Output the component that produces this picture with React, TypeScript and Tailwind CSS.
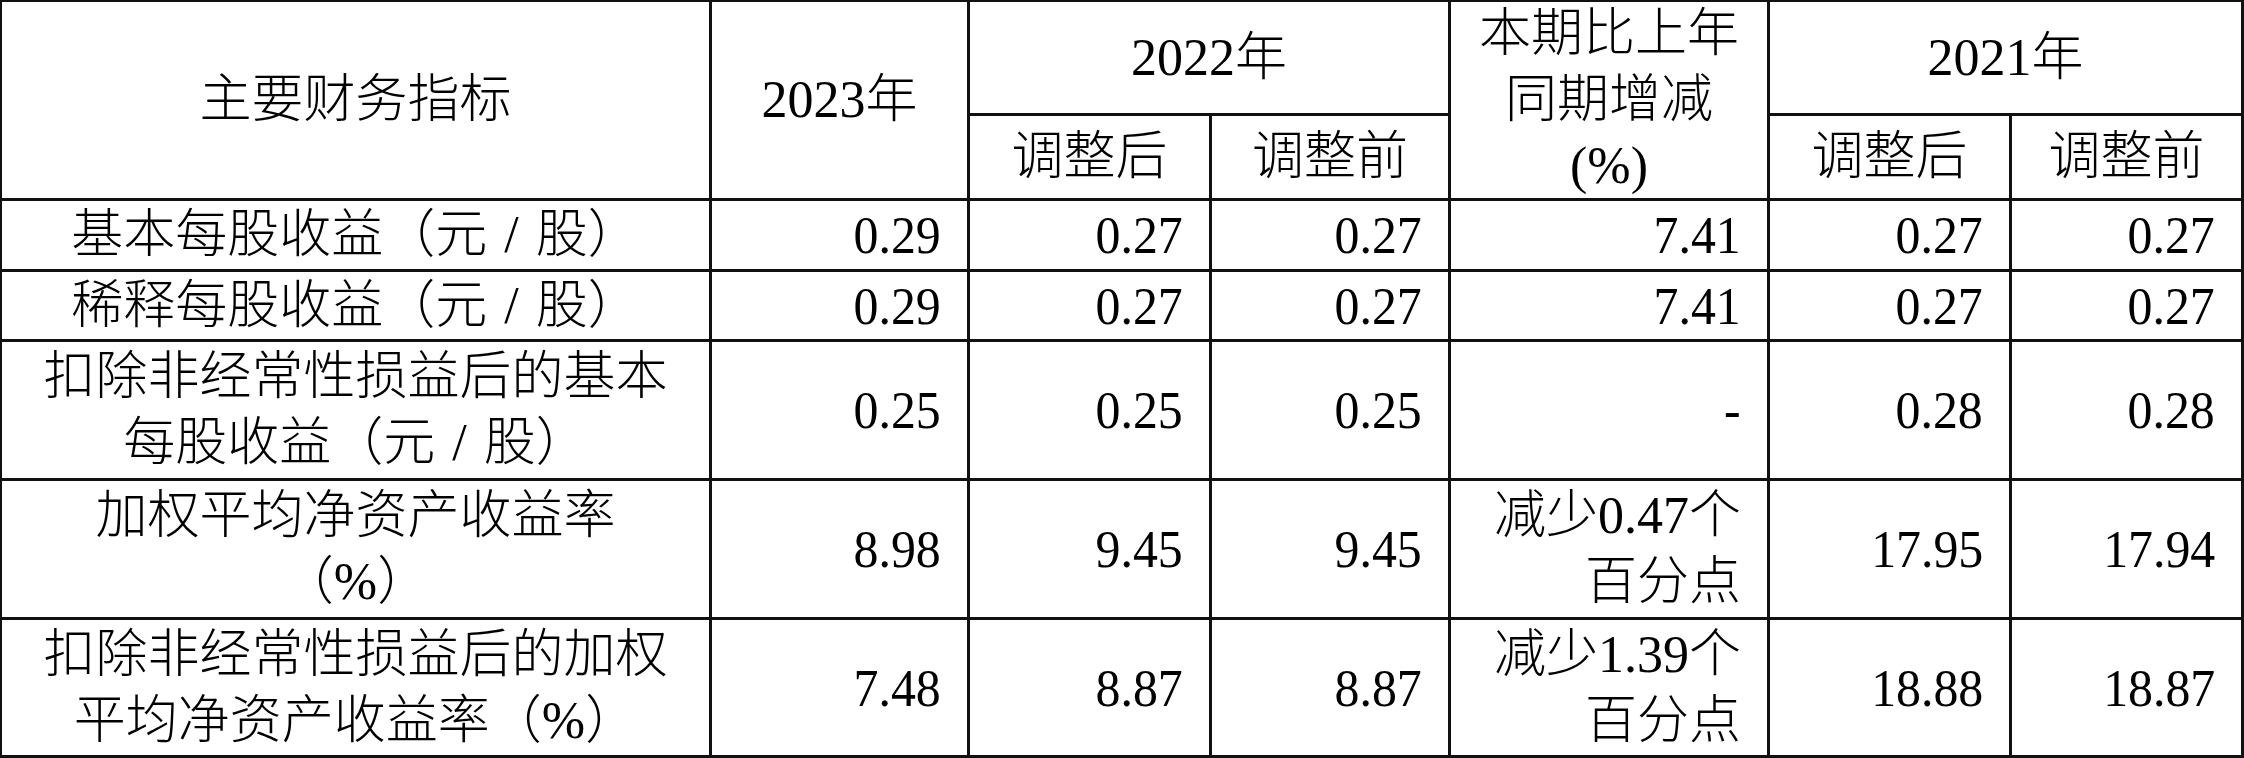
import React from "react";

type CellProps = {
  children?: React.ReactNode;
  className?: string;
};

// every cell draws its own right and bottom rule; the grid draws top and left
function Cell({ children, className = "" }: CellProps) {
  return (
    <div
      className={`flex items-center border-r-[3px] border-b-[3px] border-[#111] ${className}`}
    >
      {children}
    </div>
  );
}

function Head({ children, className = "" }: CellProps) {
  return (
    <Cell className={`justify-center text-center leading-[66px] ${className}`}>
      <div>{children}</div>
    </Cell>
  );
}

function Label({ children }: CellProps) {
  return (
    <Cell className="justify-center text-center leading-[66px]">
      <div>{children}</div>
    </Cell>
  );
}

function Num({ children }: CellProps) {
  const plain = typeof children === "string";
  return (
    <Cell className="justify-end pr-[26px] text-right leading-[66px]">
      {plain ? (
        <div className="origin-right scale-x-[0.94] text-[53px]">{children}</div>
      ) : (
        <div>{children}</div>
      )}
    </Cell>
  );
}

const Slash = () => <span className="mx-[17px]">/</span>;

const rows: { label: React.ReactNode; values: React.ReactNode[] }[] = [
  {
    label: (
      <>
        基本每股收益（元<Slash />股）
      </>
    ),
    values: ["0.29", "0.27", "0.27", "7.41", "0.27", "0.27"],
  },
  {
    label: (
      <>
        稀释每股收益（元<Slash />股）
      </>
    ),
    values: ["0.29", "0.27", "0.27", "7.41", "0.27", "0.27"],
  },
  {
    label: (
      <>
        扣除非经常性损益后的基本
        <br />
        每股收益（元<Slash />股）
      </>
    ),
    values: ["0.25", "0.25", "0.25", "-", "0.28", "0.28"],
  },
  {
    label: (
      <>
        加权平均净资产收益率
        <br />
        （%）
      </>
    ),
    values: [
      "8.98",
      "9.45",
      "9.45",
      <span>
        减少0.47个
        <br />
        百分点
      </span>,
      "17.95",
      "17.94",
    ],
  },
  {
    label: (
      <>
        扣除非经常性损益后的加权
        <br />
        平均净资产收益率（%）
      </>
    ),
    values: [
      "7.48",
      "8.87",
      "8.87",
      <span>
        减少1.39个
        <br />
        百分点
      </span>,
      "18.88",
      "18.87",
    ],
  },
];

export default function App() {
  return (
    <div className="h-[758px] w-[2244px] overflow-hidden bg-white">
      <div className="grid h-[758px] w-[2244px] grid-cols-[710px_258px_242px_239px_319px_242px_232px] grid-rows-[114px_85px_71px_70px_139px_139px_138px] border-t-2 border-l-2 border-[#111] font-['Liberation_Serif','Noto_Sans_CJK_SC',serif] text-[52px] font-light text-black">
        <Head className="row-span-2">主要财务指标</Head>
        <Head className="row-span-2">2023年</Head>
        <Head className="col-span-2">2022年</Head>
        <Head className="row-span-2">
          本期比上年
          <br />
          同期增减
          <br />
          (%)
        </Head>
        <Head className="col-span-2">2021年</Head>
        <Head>调整后</Head>
        <Head>调整前</Head>
        <Head>调整后</Head>
        <Head>调整前</Head>

        {rows.map((row, i) => (
          <React.Fragment key={i}>
            <Label>{row.label}</Label>
            {row.values.map((v, j) => (
              <Num key={j}>{v}</Num>
            ))}
          </React.Fragment>
        ))}
      </div>
    </div>
  );
}
